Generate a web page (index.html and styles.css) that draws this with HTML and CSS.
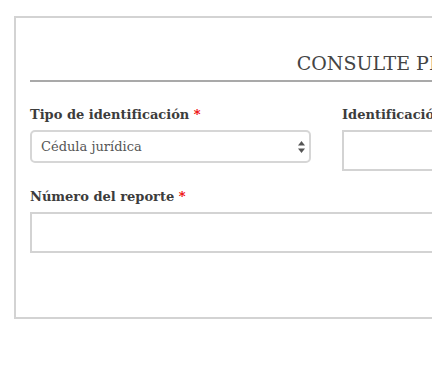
FILE: index.html
```html
<!DOCTYPE html>
<html lang="es">
  <head>
    <meta charset="UTF-8" />
    <meta name="viewport" content="width=device-width, initial-scale=1.0" />
    <title>Consulte permiso</title>
    <link rel="stylesheet" href="styles.css">
  </head>
  <body>
    <div class="form-card">
      <div class="form-header">
        <h2>CONSULTE PERMISO SANITARIO</h2>
      </div>
      <form class="form-grid">
        <div class="field">
          <label for="tipo">Tipo de identificación <span class="req">*</span></label>
          <div class="select-wrap">
            <select id="tipo">
              <option>Cédula jurídica</option>
              <option>Cédula física</option>
            </select>
            <svg class="select-arrows" width="7" height="12" viewBox="0 0 7 12">
              <path d="M3.5 0 L7 4.5 L0 4.5 Z" fill="#555" />
              <path d="M0 7.5 L7 7.5 L3.5 12 Z" fill="#555" />
            </svg>
          </div>
        </div>
        <div class="field">
          <label for="ident">Identificación <span class="req">*</span></label>
          <input type="text" id="ident" class="text-input" />
        </div>
        <div class="field"></div>
        <div class="field full">
          <label for="reporte">Número del reporte <span class="req">*</span></label>
          <input type="text" id="reporte" class="text-input" />
        </div>
      </form>
    </div>
  </body>
</html>
```

FILE: styles.css
```css
html,
body {
  overflow: hidden;
}
body {
  margin: 0;
  background-color: white;
  font-family: "DejaVu Serif", serif;
  color: #444;
}
.form-card {
  margin: 16px 0 0 14px;
  width: 869px;
  padding: 0 14px 64px 14px;
  border: 2px solid #d3d3d3;
}
.form-header {
  border-bottom: 2px solid #a9a9a9;
  padding-top: 34px;
  padding-bottom: 6px;
  text-align: center;
}
.form-header h2 {
  margin: 0;
  font-size: 19px;
  font-weight: normal;
  line-height: 22px;
  color: #444;
}
.form-grid {
  display: grid;
  grid-template-columns: 281px 281px 1fr;
  column-gap: 31px;
  row-gap: 18px;
  margin-top: 25px;
}
.field label {
  display: block;
  font-size: 13px;
  font-weight: bold;
  line-height: 16px;
  margin-bottom: 7px;
  color: #3c3c3c;
}
.field.full {
  grid-column: 1 / -1;
}
.req {
  color: #e00;
}
.select-wrap {
  position: relative;
}
.select-wrap select {
  appearance: none;
  -webkit-appearance: none;
  width: 100%;
  height: 33px;
  padding: 0 9px;
  border: 2px solid #d6d6d6;
  border-radius: 5px;
  background-color: white;
  font-family: "DejaVu Serif", serif;
  font-size: 13px;
  color: #555;
}
.select-arrows {
  position: absolute;
  right: 6px;
  top: 11px;
}
.text-input {
  display: block;
  box-sizing: border-box;
  width: 100%;
  height: 41px;
  border: 2px solid #d3d3d3;
  padding: 0 10px;
  font-family: "DejaVu Serif", serif;
  font-size: 13px;
}
```
